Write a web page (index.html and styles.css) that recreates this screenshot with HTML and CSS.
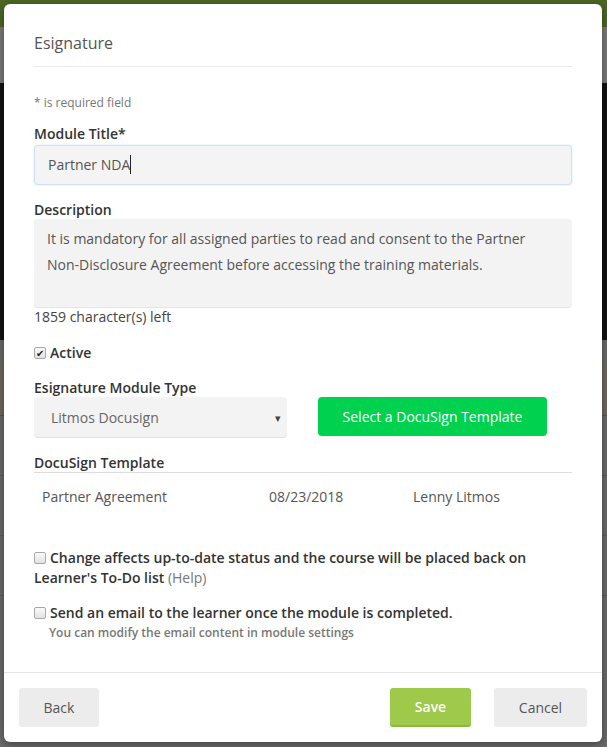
FILE: index.html
```html
<!DOCTYPE html>
<html lang="en">
<head>
  <meta charset="UTF-8" />
  <meta name="viewport" content="width=device-width, initial-scale=1.0"/>
  <title>Esignature</title>
  <link rel="stylesheet" href="styles.css">
</head>
<body>
  <!-- page behind the overlay -->
  <div class="backdrop">
    <div class="bg-topbar"></div>
    <div class="bg-subbar"></div>
    <div class="bg-dark"></div>
    <div class="bg-content">
      <div class="bg-row bg-row-tan"></div>
      <div class="bg-row"></div>
      <div class="bg-row"></div>
      <div class="bg-row"></div>
    </div>
  </div>

  <div class="modal">
    <header class="modal-header">
      <h1>Esignature</h1>
    </header>

    <main class="modal-body">
      <p class="required-note">* is required field</p>

      <label class="field-label first" for="moduleTitle">Module Title*</label>
      <div class="text-input focused" id="moduleTitle">Partner NDA<span class="caret"></span></div>

      <label class="field-label" for="description">Description</label>
      <div class="text-area" id="description">It is mandatory for all assigned parties to read and consent to the Partner Non-Disclosure Agreement before accessing the training materials.</div>
      <p class="char-count">1859 character(s) left</p>

      <div class="check-row active-row">
        <span class="checkbox checked"></span>Active
      </div>

      <label class="field-label">Esignature Module Type</label>
      <div class="type-row">
        <div class="select-box">
          <span>Litmos Docusign</span>
          <span class="select-arrow">&#9662;</span>
        </div>
        <button class="btn-docusign">Select a DocuSign Template</button>
      </div>

      <div class="section-label">DocuSign Template</div>
      <div class="template-row">
        <span>Partner Agreement</span>
        <span>08/23/2018</span>
        <span>Lenny Litmos</span>
      </div>

      <p class="check-row option first-option">
        <span class="checkbox"></span>Change affects up-to-date status and the course will be placed back on Learner's To-Do list <span class="help">(Help)</span>
      </p>

      <p class="check-row option">
        <span class="checkbox"></span>Send an email to the learner once the module is completed.
      </p>
      <p class="hint">You can modify the email content in module settings</p>
    </main>

    <footer class="modal-footer">
      <button class="btn btn-back">Back</button>
      <div class="footer-right">
        <button class="btn btn-save">Save</button>
        <button class="btn btn-cancel">Cancel</button>
      </div>
    </footer>
  </div>
</body>
</html>
```

FILE: styles.css
```css
/* General Reset */
* {
    margin: 0;
    padding: 0;
    box-sizing: border-box;
}
body {
    font-family: 'Open Sans', 'Liberation Sans', sans-serif;
    background-color: #666;
    color: #333;
    overflow: hidden;
    height: 747px;
}

/* Background page (dimmed) */
.backdrop {
    display: flex;
    flex-direction: column;
    height: 747px;
}
.bg-topbar {
    height: 27px;
    background: #4d6722;
}
.bg-subbar {
    height: 56px;
    background: #7a7a7a;
}
.bg-dark {
    height: 257px;
    background: #111;
}
.bg-content {
    flex: 1;
    background: #6a6a6a;
    padding-top: 24px;
}
.bg-row {
    height: 60px;
    border-bottom: 1px solid #5c5c5c;
}
.bg-row-tan {
    height: 52px;
    background: #6e6a5e;
    border-bottom: 1px solid #555;
}

/* Modal */
.modal {
    position: absolute;
    left: 4px;
    top: 4px;
    width: 598px;
    height: 738px;
    background: #fff;
    border-radius: 6px;
    box-shadow: 0 2px 8px rgba(0, 0, 0, 0.4);
    display: flex;
    flex-direction: column;
}
.modal-header {
    margin: 0 30px;
    padding: 28px 0 12px;
    border-bottom: 1px solid #e9e9e9;
}
.modal-header h1 {
    font-size: 16px;
    font-weight: 400;
    line-height: 22px;
    color: #555;
}
.modal-body {
    flex: 1;
    padding: 28px 30px 0;
}
.required-note {
    font-size: 12px;
    line-height: 15px;
    color: #777;
}
.field-label {
    display: block;
    margin-top: 15px;
    font-size: 14px;
    font-weight: 600;
    line-height: 19px;
    color: #333;
}
.field-label.first {
    margin-top: 14px;
}
.text-input {
    margin-top: 2px;
    height: 40px;
    padding: 0 13px;
    background: #f4f4f4;
    border: 1px solid #f0f0f0;
    border-radius: 4px;
    font-size: 14px;
    line-height: 38px;
    color: #555;
}
.text-input.focused {
    border-color: #cfe2f5;
    box-shadow: 0 0 2px rgba(102, 175, 233, 0.35);
}
.caret {
    display: inline-block;
    width: 1px;
    height: 19px;
    background: #222;
    vertical-align: -4px;
}
.text-area {
    height: 88px;
    padding: 7px 13px;
    background: #f3f3f3;
    border-radius: 4px;
    box-shadow: 0 1px 0 #e4e4e4;
    font-size: 14px;
    line-height: 26px;
    color: #555;
}
.char-count {
    font-size: 14px;
    line-height: 20px;
    color: #444;
}
.check-row {
    font-size: 14px;
    font-weight: 600;
    line-height: 20px;
    color: #333;
}
.active-row {
    margin-top: 16px;
}
.checkbox {
    display: inline-block;
    width: 12px;
    height: 12px;
    margin-right: 4px;
    border: 1px solid #a8a8a8;
    border-radius: 2px;
    background: linear-gradient(#fafafa, #e2e2e2);
    vertical-align: -1px;
    position: relative;
}
.checkbox.checked::after {
    content: "\2714";
    position: absolute;
    left: 1px;
    top: -5px;
    font-size: 10px;
    font-weight: 400;
    color: #222;
}
.type-row {
    display: flex;
    align-items: flex-start;
    gap: 31px;
}
.select-box {
    width: 253px;
    height: 40px;
    padding: 0 6px 0 17px;
    display: flex;
    align-items: center;
    justify-content: space-between;
    background: #f3f3f3;
    border-radius: 4px;
    box-shadow: 0 1px 0 #e2e2e2;
    font-size: 14px;
    color: #666;
}
.select-arrow {
    font-size: 11px;
    color: #444;
}
.btn-docusign {
    width: 229px;
    height: 39px;
    border: none;
    border-radius: 4px;
    background: #00d14f;
    color: #fff;
    font-family: inherit;
    font-size: 14px;
}
.section-label {
    margin-top: 16px;
    font-size: 14px;
    font-weight: 600;
    line-height: 19px;
    color: #333;
    border-bottom: 1px solid #ddd;
}
.template-row {
    display: grid;
    grid-template-columns: 227px 144px auto;
    margin-top: 14px;
    padding-left: 8px;
    font-size: 14px;
    line-height: 20px;
    color: #555;
}
.option {
    margin-top: 15px;
}
.first-option {
    margin-top: 41px;
}
.help {
    font-weight: 400;
    color: #777;
}
.hint {
    margin-top: 2px;
    padding-left: 15px;
    font-size: 12px;
    font-weight: 600;
    line-height: 15px;
    color: #777;
}

/* Footer */
.modal-footer {
    display: flex;
    justify-content: space-between;
    padding: 15px 15px 15px 15px;
    border-top: 1px solid #e5e5e5;
}
.footer-right {
    display: flex;
    gap: 23px;
}
.btn {
    height: 39px;
    border: none;
    border-radius: 3px;
    font-family: inherit;
    font-size: 14px;
    cursor: pointer;
}
.btn-back {
    width: 80px;
    background: #ececec;
    color: #555;
}
.btn-save {
    width: 81px;
    background: #9ec94b;
    border-bottom: 2px solid #8db63d;
    color: #fff;
    font-weight: 600;
}
.btn-cancel {
    width: 93px;
    background: #ececec;
    color: #555;
}
```
